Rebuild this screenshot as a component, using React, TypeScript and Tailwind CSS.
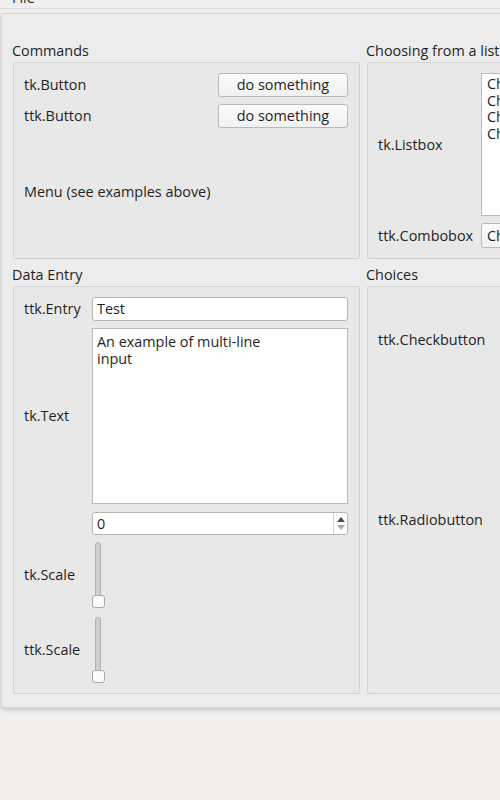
import React from "react";

const Label = ({ children }: { children: React.ReactNode }) => (
	<span className="text-[14.4px] leading-[18px] text-[#1f1f1f] whitespace-nowrap">{children}</span>
);

const Frame = ({ title, className, children }: { title: string; className?: string; children: React.ReactNode }) => (
	<div className="flex flex-col">
		<div className="h-[18px] mb-[2px] text-[14.4px] leading-[18px] text-[#1f1f1f] whitespace-nowrap">{title}</div>
		<div className={`ml-[1px] border border-[#d2d2d2] rounded-[2px] bg-[#e8e8e8] ${className ?? ""}`}>{children}</div>
	</div>
);

const Btn = ({ children }: { children: React.ReactNode }) => (
	<div className="w-[130px] h-[24px] flex items-center justify-center rounded-[3px] border border-[#b9b9b9] bg-gradient-to-b from-[#fbfbfb] to-[#f1f1f1] text-[14.4px] text-[#1f1f1f]">
		{children}
	</div>
);

const Scale = () => (
	<div className="relative w-[13px] h-[66px]">
		<div className="absolute left-[3px] top-0 w-[6px] h-[62px] rounded-[3px] border border-[#b3b3b3] bg-[#cfcfcf]" />
		<div className="absolute left-0 bottom-0 w-[13px] h-[13px] rounded-[3px] border border-[#a9a9a9] bg-[#fbfbfb]" />
	</div>
);

export default function App() {
	return (
		<div className="w-[500px] h-[800px] overflow-hidden bg-[#f0efee] font-['Open_Sans',sans-serif]">
			<div className="h-[9px] overflow-hidden border-b border-[#dadada] bg-[#efefef]">
				<div className="pl-[12px] -mt-[11px] text-[14.4px] leading-[18px] text-[#1f1f1f]">File</div>
			</div>
			<div className="mt-[4px] ml-[1px] w-[540px] h-[695px] border border-[#d8d8d8] rounded-[3px] bg-[#ececec] shadow-[0_2px_4px_rgba(0,0,0,0.18)] pt-[28px] pl-[10px]">
				<div className="grid grid-cols-[348px_200px] gap-x-[6px] gap-y-[7px]">
					<Frame title="Commands" className="h-[197px] pl-[10px] pr-[11px] pt-[10px] flex flex-col">
						<div className="flex items-center justify-between">
							<Label>tk.Button</Label>
							<Btn>do something</Btn>
						</div>
						<div className="flex items-center justify-between mt-[7px]">
							<Label>ttk.Button</Label>
							<Btn>do something</Btn>
						</div>
						<div className="flex-1 flex items-center pb-[2px]">
							<Label>Menu (see examples above)</Label>
						</div>
					</Frame>
					<Frame title="Choosing from a list" className="h-[197px] pl-[10px] pt-[10px]">
						<div className="grid grid-cols-[103px_1fr] gap-y-[7px]">
							<div className="flex items-center"><Label>tk.Listbox</Label></div>
							<div className="h-[143px] border border-[#bdbdbd] bg-white pl-[5px] pt-[2px] text-[14.4px] leading-[16.7px] text-[#1f1f1f]">
								<div>Choice 1</div>
								<div>Choice 2</div>
								<div>Choice 3</div>
								<div>Choice 4</div>
							</div>
							<div className="flex items-center"><Label>ttk.Combobox</Label></div>
							<div className="h-[25px] w-[150px] flex items-center rounded-[3px] border border-[#b9b9b9] bg-gradient-to-b from-[#fbfbfb] to-[#f1f1f1] pl-[5px] text-[14.4px] text-[#1f1f1f]">Choice 1</div>
						</div>
					</Frame>
					<Frame title="Data Entry" className="h-[408px] pl-[10px] pr-[11px] pt-[10px]">
						<div className="grid grid-cols-[68px_1fr] gap-y-[7px]">
							<div className="flex items-center"><Label>ttk.Entry</Label></div>
							<div className="h-[24px] flex items-center rounded-[3px] border border-[#b5b5b5] bg-white pl-[4px] text-[14.4px] text-[#1f1f1f]">Test</div>
							<div className="flex items-center"><Label>tk.Text</Label></div>
							<div className="h-[176px] border border-[#b9b9b9] bg-white pl-[4px] pt-[4px] text-[14.4px] leading-[17px] text-[#1f1f1f]">
								<div>An example of multi-line</div>
								<div>input</div>
							</div>
							<div />
							<div className="h-[23px] mt-[1px] flex rounded-[3px] border border-[#b5b5b5] bg-white text-[14.4px] text-[#1f1f1f]">
								<div className="flex-1 flex items-center pl-[4px]">0</div>
								<div className="w-[14px] border-l border-[#d0d0d0] flex flex-col items-center justify-center gap-[3px]">
									<svg width="8" height="5" viewBox="0 0 8 5"><path d="M0 5 L4 0 L8 5 Z" fill="#4a4a4a" /></svg>
									<svg width="8" height="5" viewBox="0 0 8 5"><path d="M0 0 L4 5 L8 0 Z" fill="#a8a8a8" /></svg>
								</div>
							</div>
							<div className="flex items-center"><Label>tk.Scale</Label></div>
							<div><Scale /></div>
							<div className="flex items-center mt-[2px]"><Label>ttk.Scale</Label></div>
							<div className="mt-[2px]"><Scale /></div>
						</div>
					</Frame>
					<Frame title="Choices" className="h-[408px] pl-[10px]">
						<div className="pt-[40px]"><Label>ttk.Checkbutton</Label></div>
						<div className="pt-[156px]"><Label>ttk.Radiobutton</Label></div>
					</Frame>
				</div>
			</div>
		</div>
	);
}
